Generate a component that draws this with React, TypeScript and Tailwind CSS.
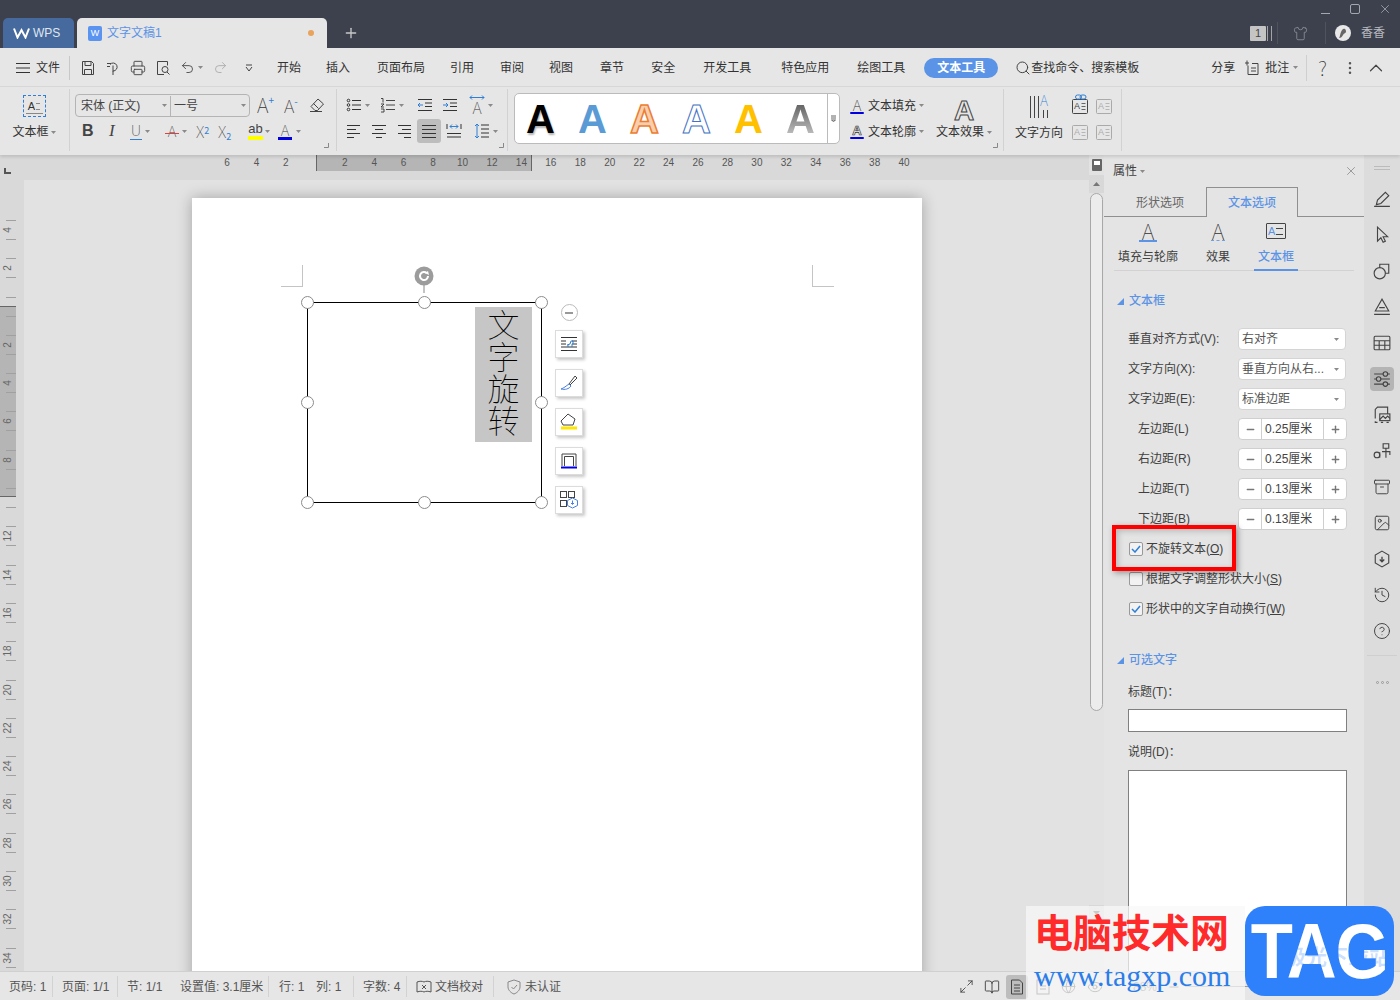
import type { ReactNode } from 'react';
import {
  Archive,
  BookOpen,
  ChevronUp,
  CircleHelp,
  EllipsisVertical,
  Eye,
  Globe,
  History,
  Image,
  Maximize2,
  Minus,
  Plus,
  Printer,
  Redo2,
  Search,
  Shirt,
  Undo2,
  X,
} from 'lucide-react';

const rulerTop = ['6', '4', '2', '', '2', '4', '6', '8', '10', '12', '14', '16', '18', '20', '22', '24', '26', '28', '30', '32', '34', '36', '38', '40'];
const rulerLeft = ['4', '2', '', '2', '4', '6', '8', '', '12', '14', '16', '18', '20', '22', '24', '26', '28', '30', '32', '34'];

const thin = "font-['Noto_Sans_CJK_SC',sans-serif] font-thin";

type SvgProps = { w?: number; h?: number; children: ReactNode; className?: string };

function Svg({ w = 16, h = 16, children, className = '' }: SvgProps) {
  return (
    <svg width={w} height={h} viewBox={`0 0 ${w} ${h}`} fill="none" stroke="currentColor" strokeWidth="1" className={`shrink-0 ${className}`}>
      {children}
    </svg>
  );
}

function Caret({ className = 'ml-[3px]' }: { className?: string }) {
  return (
    <svg width="5" height="3" viewBox="0 0 5 3" className={`shrink-0 ${className}`}>
      <path d="M0 0h5L2.5 3z" fill="#8a8a8a" />
    </svg>
  );
}

function Launcher({ className = '' }: { className?: string }) {
  return (
    <Svg w={5} h={5} className={`text-[#888] ${className}`}>
      <path d="M4.5 0v4.5H0" />
    </Svg>
  );
}

function Lines({ kind }: { kind: 'left' | 'center' | 'right' | 'justify' }) {
  const paths = {
    left: 'M1 2.500h13M1 6.500h9M1 10.500h13M1 14.500h7',
    center: 'M1 2.500h14M4 6.500h8M1 10.500h14M5 14.500h6',
    right: 'M2 2.500h13M6 6.500h9M2 10.500h13M8 14.500h7',
    justify: 'M1 2.500h14M1 6.500h14M1 10.500h14M1 14.500h14',
  };
  return (
    <Svg className="text-[#333]">
      <path d={paths[kind]} />
    </Svg>
  );
}

function SmallTextBox({ tone = 'muted', link }: { tone?: 'muted' | 'dark'; link?: boolean }) {
  const color = tone === 'dark' ? 'text-[#444]' : 'text-[#aaa]';
  return (
    <div className="relative flex h-[20px] w-[16px] items-end">
      <Svg w={16} h={15} className={color}>
        <rect x="0.5" y="0.5" width="15" height="14" rx="1" />
        <path d="M9.5 4.5h4M9.5 7.5h4M9.5 10.5h4" strokeWidth="0.8" />
      </Svg>
      <span className={`absolute bottom-[2px] left-[2px] text-[9px] leading-[11px] ${color}`}>A</span>
      {link && (
        <Svg w={12} h={7} className="absolute left-[3px] top-[0px] text-[#2f7fd6]">
          <rect x="0.5" y="1" width="6" height="4" rx="2" />
          <rect x="5" y="1" width="6" height="4" rx="2" />
        </Svg>
      )}
    </div>
  );
}

function Handle({ className }: { className: string }) {
  return <div className={`absolute h-[13px] w-[13px] rounded-full border border-[#8c8c8c] bg-white ${className}`} />;
}

function FloatBtn({ children }: { children: ReactNode }) {
  return (
    <div className="flex h-[28px] w-[28px] items-center justify-center border border-[#dcdcdc] bg-white shadow-[2px_2px_3px_rgba(0,0,0,0.22)]">
      {children}
    </div>
  );
}

function PanelSelect({ label, value }: { label: string; value: string }) {
  return (
    <div className="flex h-[30px] items-center pl-[24px]">
      <span className="w-[110px] text-[12px] text-[#404040]">{label}</span>
      <div className="flex h-[22px] w-[108px] items-center justify-between rounded-[4px] border border-[#d4d4d4] bg-white pl-[3px] pr-[6px] text-[12px] text-[#555]">
        <span>{value}</span>
        <Caret className="" />
      </div>
    </div>
  );
}

function Stepper({ label, value }: { label: string; value: string }) {
  return (
    <div className="flex h-[30px] items-center pl-[34px]">
      <span className="w-[100px] text-[12px] text-[#404040]">{label}</span>
      <div className="flex h-[22px] w-[109px] items-center rounded-[4px] border border-[#cfcfcf] bg-white text-[12px] text-[#444]">
        <span className="flex h-full w-[23px] items-center justify-center border-r border-[#cfcfcf]">
          <Minus size={11} strokeWidth={3} className="text-[#777]" />
        </span>
        <span className="flex-1 pl-[3px]">{value}</span>
        <span className="flex h-full w-[23px] items-center justify-center border-l border-[#cfcfcf]">
          <Plus size={11} strokeWidth={3} className="text-[#777]" />
        </span>
      </div>
    </div>
  );
}

function CheckRow({ checked, label, hot }: { checked: boolean; label: string; hot: string }) {
  return (
    <div className="flex h-[30px] items-center pl-[25px] text-[12px] text-[#404040]">
      <div className="mr-[3px] flex h-[14px] w-[14px] items-center justify-center rounded-[2px] border border-[#999] bg-[#f2f2f2]">
        {checked && (
          <Svg w={10} h={8} className="text-[#2f7fd6]">
            <path d="M1 4l3 3 5-6" strokeWidth="1.5" />
          </Svg>
        )}
      </div>
      <span>
        {label}(<span className="underline">{hot}</span>)
      </span>
    </div>
  );
}

function SectionTitle({ children, className = '' }: { children: ReactNode; className?: string }) {
  return (
    <div className={`flex h-[18px] items-center pl-[13px] text-[12px] text-[#5b93e6] ${className}`}>
      <svg width="7" height="7" viewBox="0 0 7 7" className="mr-[5px]">
        <path d="M7 0v7H0z" fill="#5b93e6" />
      </svg>
      {children}
    </div>
  );
}

function RailIcon({ children, active }: { children: ReactNode; active?: boolean }) {
  return (
    <div className="flex h-[36px] items-center justify-center text-[#444]">
      <div className={`flex h-[24px] w-[24px] items-center justify-center rounded-[4px] [&>svg]:h-[18px] [&>svg]:w-[18px] ${active ? 'bg-[#b4b4b4]' : ''}`}>{children}</div>
    </div>
  );
}

function TopBar() {
  return (
    <div className="relative flex h-[48px] items-end bg-[#3d414d] pl-[3px]">
      <div className="flex h-[30px] w-[71px] items-center rounded-t-[5px] bg-[#466a9e] pl-[10px] text-[12px] text-[#dfe6f0]">
        <Svg w={17} h={12} className="mr-[3px] text-white">
          <path d="M1 1.5l3.5 9L8.5 3l4 7.5L16 1.5" strokeWidth="2" />
        </Svg>
        WPS
      </div>
      <div className="ml-[3px] flex h-[30px] w-[250px] items-center whitespace-nowrap rounded-t-[5px] bg-[#e6e6e6] pl-[11px] text-[12px] text-[#5b93e6]">
        <div className="mr-[5px] flex h-[15px] w-[14px] shrink-0 items-center justify-center rounded-[2px] bg-[#5b93f0] text-[9px] leading-none text-white">W</div>
        文字文稿1
        <div className="ml-[146px] h-[6px] w-[6px] shrink-0 rounded-full bg-[#e8a35c]" />
      </div>
      <div className="ml-[16px] flex h-[30px] items-center text-[#c8c8c8]">
        <Plus size={16} strokeWidth={2} />
      </div>
      <div className="absolute right-0 top-0 flex h-[48px] w-[160px] flex-col items-end pr-[8px] text-[#a4a7ae]">
        <div className="flex h-[18px] items-center gap-[17px]">
          <Svg w={12} h={12}>
            <path d="M1 10.5h9" />
          </Svg>
          <Svg w={12} h={12}>
            <rect x="1.5" y="1.5" width="9" height="9" rx="1.5" />
          </Svg>
          <X size={14} strokeWidth={1.4} />
        </div>
        <div className="flex h-[30px] items-center pr-[7px]">
          <div className="flex h-[15px] w-[16px] items-center justify-center rounded-[1px] bg-[#c4c4c4] text-[11px] text-[#444]">1</div>
          <div className="ml-[1px] h-[15px] w-[5px] border-x border-[#a4a4a4]" />
          <div className="ml-[5px] h-[22px] w-px bg-[#4f535e]" />
          <Shirt size={15} strokeWidth={1.4} className="ml-[15px] text-[#8a8d95]" />
          <div className="ml-[17px] h-[22px] w-px bg-[#4f535e]" />
          <svg width="16" height="16" viewBox="0 0 16 16" className="ml-[9px]">
            <circle cx="8" cy="8" r="8" fill="#e8e8e8" />
            <path d="M10 4c-2-1-3 1-4 3s-1 5-2 6c2 0 3-1 4-3s3-2 3-3-0-2-1-3z" fill="#666" />
          </svg>
          <span className="ml-[10px] text-[12px] text-[#b8bac0]">香香</span>
        </div>
      </div>
    </div>
  );
}

function MenuBar() {
  const tabs = [
    ['开始', 'ml-[11px]'],
    ['插入', 'ml-[25px]'],
    ['页面布局', 'ml-[27px]'],
    ['引用', 'ml-[25px]'],
    ['审阅', 'ml-[26px]'],
    ['视图', 'ml-[25px]'],
    ['章节', 'ml-[27px]'],
    ['安全', 'ml-[27px]'],
    ['开发工具', 'ml-[28px]'],
    ['特色应用', 'ml-[30px]'],
    ['绘图工具', 'ml-[28px]'],
  ];
  return (
    <div className="flex h-[39px] items-center border-b border-[#d8d8d8] bg-[#e6e6e6] pl-[16px] pt-[1px] text-[12px] text-[#333]">
      <Svg w={14} h={12}>
        <path d="M0 1.5h14M0 6h14M0 10.5h14" />
      </Svg>
      <span className="ml-[6px]">文件</span>
      <div className="ml-[9px] h-[24px] w-px bg-[#c8c8c8]" />
      <div className="ml-[10px] flex w-[186px] items-center text-[#444]">
        <Svg className="mr-[9px]">
          <path d="M2.5 1.5h9l2 2v11h-11zM5 1.5v4h6v-4M4.5 14.5v-5h7v5" />
        </Svg>
        <Svg className="mr-[9px]">
          <path d="M5 4.5a4 4 0 1 1 3 6.5v4M8 5.5v6M2 3.5h4M2 6.5h3" />
        </Svg>
        <Printer size={16} strokeWidth={1.4} className="mr-[9px]" />
        <Svg className="mr-[9px]">
          <path d="M9 14.5H2.5v-13h10v4M4.5 3.5" />
          <circle cx="10" cy="9.5" r="3" />
          <path d="M12 12l2.5 2.5" />
        </Svg>
        <Undo2 size={15} strokeWidth={1.4} />
        <Caret className="ml-[3px] mr-[10px]" />
        <Redo2 size={15} strokeWidth={1.4} className="text-[#aaa]" />
        <Svg w={8} h={8} className="ml-[17px]">
          <path d="M1 1h6M1 3l3 4 3-4" />
        </Svg>
      </div>
      {tabs.map(([name, margin]) => (
        <span key={name} className={`whitespace-nowrap ${margin}`}>
          {name}
        </span>
      ))}
      <div className="ml-[19px] flex h-[20px] w-[74px] items-center justify-center rounded-full bg-[#5b93e6] font-bold text-white">文本工具</div>
      <Search size={16} strokeWidth={1.5} className="ml-[17px] text-[#444]" />
      <span className="whitespace-nowrap">查找命令、搜索模板</span>
      <span className="ml-[72px]">分享</span>
      <Svg className="ml-[10px] text-[#444]">
        <path d="M3 5.5v9h10v-11H7M2 .5v5M0 3h4M6 8h5M6 11h5" />
      </Svg>
      <span className="ml-[4px]">批注</span>
      <Caret className="ml-[4px]" />
      <div className="ml-[8px] h-[26px] w-px bg-[#cfcfcf]" />
      <span className={`ml-[11px] text-[20px] leading-none text-[#333] ${thin}`}>?</span>
      <EllipsisVertical size={16} strokeWidth={1.8} className="ml-[15px] text-[#555]" />
      <ChevronUp size={22} strokeWidth={1.3} className="ml-[7px] text-[#444]" />
    </div>
  );
}

function Letter({ className, children = 'A' }: { className: string; children?: ReactNode }) {
  return <span className={`font-['Liberation_Sans',sans-serif] leading-none ${className}`}>{children}</span>;
}

function Ribbon() {
  return (
    <div className="relative z-10 flex h-[68px] bg-[#e6e6e6] pt-[2px] text-[12px] text-[#333] shadow-[0_2px_3px_rgba(0,0,0,0.12)]">
      {/* 文本框 */}
      <div className="flex h-[62px] w-[70px] flex-col items-center border-r border-[#d2d2d2] pr-[1px]">
        <div className="relative mt-[6px] flex h-[22px] w-[23px] items-center justify-center border border-dashed border-[#2f7fd6] text-[11px] leading-none">
          <span>A</span>
          <span className="ml-[1px] h-[7px] w-[4px] border-y border-[#888]" />
          <span className="absolute bottom-[2px] left-[2px] h-px w-[17px] bg-[#888]" />
        </div>
        <div className="mt-[6px] flex items-center">
          文本框
          <Caret className="ml-[2px]" />
        </div>
      </div>

      {/* 字体 */}
      <div className="relative flex h-[62px] w-[267px] flex-col gap-[4px] border-r border-[#d2d2d2] pl-[5px] pt-[5px]">
        <div className="flex h-[22px] items-center">
          <div className="flex h-[23px] w-[175px] items-center rounded-[4px] border border-[#b4b4b4] pt-[1px] text-[#444]">
            <span className="w-[82px] pl-[5px]">宋体 (正文)</span>
            <Caret className="ml-[4px]" />
            <div className="ml-[3px] h-full w-px bg-[#b4b4b4]" />
            <span className="ml-[3px] flex-1">一号</span>
            <Caret className="mr-[3px]" />
          </div>
          <span className={`ml-[7px] flex w-[27px] items-start text-[20px] leading-none text-[#333] ${thin}`}>
            A<span className="text-[10px] font-normal text-[#2f7fd6]">+</span>
          </span>
          <span className={`flex w-[25px] items-start text-[18px] leading-none text-[#333] ${thin}`}>
            A<span className="text-[10px] font-normal text-[#2f7fd6]">-</span>
          </span>
          <Svg className="text-[#444]">
            <path d="M6 13.5l-4-4 7-7.5 5.5 5-6 6.5zM4.500 6.500l5 5M1 14.500h12" />
          </Svg>
        </div>
        <div className="flex h-[22px] items-center text-[#444]">
          <span className="w-[25px] pl-[7px] font-['Liberation_Sans',sans-serif] text-[16px] font-bold">B</span>
          <span className={`w-[25px] pl-[9px] font-['Liberation_Serif',serif] text-[17px] italic`}>I</span>
          <div className="flex w-[32px] items-center pl-[5px]">
            <div className="flex h-[18px] w-[12px] flex-col items-center leading-none">
              <span className={`text-[15px] leading-[15px] ${thin}`}>U</span>
              <span className="mt-[2px] h-px w-[12px] bg-[#2f7fd6]" />
            </div>
            <Caret className="ml-[3px]" />
          </div>
          <div className="flex w-[36px] items-center pl-[8px]">
            <div className={`relative h-[16px] w-[14px] text-center text-[15px] leading-[15px] ${thin}`}>
              A<span className="absolute left-0 top-[10px] h-px w-[14px] bg-[#e04040]" />
            </div>
            <Caret className="ml-[3px]" />
          </div>
          <span className={`w-[25px] pl-[3px] text-[16px] leading-none ${thin}`}>
            X<sup className="font-normal text-[9px] text-[#2f7fd6]">2</sup>
          </span>
          <span className={`w-[25px] text-[16px] leading-none ${thin}`}>
            X<sub className="font-normal text-[9px] text-[#2f7fd6]">2</sub>
          </span>
          <div className="flex w-[32px] items-center pl-[5px]">
            <div className="flex flex-col items-center">
              <span className="font-['Liberation_Sans',sans-serif] text-[13px] leading-[12px]">ab</span>
              <span className="mt-px h-[4px] w-[15px] bg-[#ffff00]" />
            </div>
            <Caret className="ml-[2px]" />
          </div>
          <div className="flex items-center pl-[3px]">
            <div className="flex flex-col items-center">
              <span className={`text-[15px] leading-[13px] ${thin}`}>A</span>
              <span className="mt-px h-[3px] w-[14px] bg-[#0000e0]" />
            </div>
            <Caret className="ml-[4px]" />
          </div>
        </div>
        <Launcher className="absolute bottom-[3px] right-[7px]" />
      </div>

      {/* 段落 */}
      <div className="relative flex h-[62px] w-[171px] flex-col gap-[4px] border-r border-[#d2d2d2] pl-[9px] pt-[5px] text-[#333]">
        <div className="flex h-[22px] items-center">
          <Svg>
            <path d="M6 3.500h9M6 8h9M6 12.500h9" />
            <circle cx="2.500" cy="3.500" r="1.300" />
            <circle cx="2.500" cy="8" r="1.300" />
            <circle cx="2.500" cy="12.500" r="1.300" />
          </Svg>
          <Caret className="ml-[3px]" />
          <Svg className="ml-[10px]">
            <path d="M6 3.500h9M6 8h9M6 12.500h9M1 1.500h2v4M1 7h3l-3 3h3M1 12h3v3H1" strokeWidth="0.9" />
          </Svg>
          <Caret className="ml-[3px]" />
          <Svg className="ml-[13px]">
            <path d="M1 2.500h14M8 6h7M8 9.500h7M1 13.500h14" />
            <path d="M6 8H1M3 6L1 8l2 2" stroke="#2f7fd6" />
          </Svg>
          <Svg className="ml-[9px]">
            <path d="M1 2.500h14M8 6h7M8 9.500h7M1 13.500h14" />
            <path d="M1 8h5M4 6l2 2-2 2" stroke="#2f7fd6" />
          </Svg>
          <div className={`relative ml-[11px] flex h-[20px] w-[16px] items-end justify-center text-[16px] leading-[15px] ${thin}`}>
            A
            <Svg w={16} h={5} className="absolute left-0 top-0 text-[#2f7fd6]">
              <path d="M1 2.500h14M3 .5l-2 2 2 2M13 .5l2 2-2 2" />
            </Svg>
          </div>
          <Caret className="ml-[3px]" />
        </div>
        <div className="flex h-[22px] items-center">
          <Lines kind="left" />
          <div className="ml-[9px]">
            <Lines kind="center" />
          </div>
          <div className="ml-[9px]">
            <Lines kind="right" />
          </div>
          <div className="ml-[5px] flex h-[24px] w-[24px] items-center justify-center rounded-[3px] bg-[#bdbdbd]">
            <Lines kind="justify" />
          </div>
          <Svg className="ml-[5px]">
            <path d="M1 10.500h14M1 14h14M1 1v5M15 1v5" />
            <path d="M4 3.500h8M6 1.500l-2 2 2 2M10 1.500l2 2-2 2" stroke="#2f7fd6" />
          </Svg>
          <Svg className="ml-[12px]">
            <path d="M7 2h8M7 6h8M7 10h8M7 14h8" />
            <path d="M3 1v14M1 3l2-2 2 2M1 13l2 2 2-2" stroke="#2f7fd6" />
          </Svg>
          <Caret className="ml-[3px]" />
        </div>
        <Launcher className="absolute bottom-[3px] right-[3px]" />
      </div>

      {/* 样式 */}
      <div className="relative flex h-[62px] w-[496px] border-r border-[#d2d2d2] pl-[6px] pt-[4px]">
        <div className="flex h-[51px] w-[326px] rounded-[5px] border border-[#bbb] bg-white">
          <div className="flex flex-1 items-center text-[40px] font-bold">
            <Letter className="w-[52px] pl-[11px] text-black [text-shadow:1px_2px_2px_rgba(0,0,0,0.3)]" />
            <Letter className="w-[52px] pl-[11px] text-[#5b9bd5]" />
            <Letter className="w-[52px] pl-[11px] text-[#f8cfae] [-webkit-text-stroke:1.5px_#ed7d31]" />
            <Letter className="w-[52px] pl-[11px] text-white [-webkit-text-stroke:1px_#4472c4]" />
            <Letter className="w-[52px] pl-[11px] text-[#ffc000]" />
            <Letter className="w-[52px] bg-gradient-to-b from-[#555] to-[#ccc] bg-clip-text pl-[11px] text-transparent" />
          </div>
          <div className="flex w-[13px] items-center justify-center border-l border-[#bbb]">
            <Svg w={7} h={7} className="text-[#666]">
              <path d="M1 1h5M1 3h5M1.500 5h4L3.500 6.500z" />
            </Svg>
          </div>
        </div>
        <div className="ml-[10px] flex w-[82px] flex-col gap-[4px] pt-[1px]">
          <div className="flex h-[22px] items-center pt-[1px]">
            <div className="flex w-[14px] flex-col items-center">
              <span className={`text-[15px] leading-[14px] ${thin}`}>A</span>
              <span className="h-[2px] w-[14px] rounded-full bg-[#0000e0]" />
            </div>
            <span className="ml-[4px]">文本填充</span>
            <Caret className="ml-[3px]" />
          </div>
          <div className="flex h-[22px] items-center pt-[1px]">
            <div className="flex w-[14px] flex-col items-center">
              <span className="font-['Liberation_Sans',sans-serif] text-[13px] font-bold leading-[13px] text-white [-webkit-text-stroke:0.7px_#333]">A</span>
              <span className="h-[2px] w-[14px] rounded-full bg-[#0000e0]" />
            </div>
            <span className="ml-[4px]">文本轮廓</span>
            <Caret className="ml-[3px]" />
          </div>
        </div>
        <div className="ml-[1px] flex w-[62px] flex-col items-center pt-[4px]">
          <Letter className="h-[22px] text-[28px] font-bold text-[#e6e6e6] [-webkit-text-stroke:1px_#444]" />
          <div className="mt-[4px] flex items-center whitespace-nowrap">
            文本效果
            <Caret className="ml-[3px]" />
          </div>
        </div>
        <Launcher className="absolute bottom-[3px] right-[5px]" />
      </div>

      {/* 文字方向 */}
      <div className="flex h-[62px] w-[118px] border-r border-[#d2d2d2] pl-[11px]">
        <div className="flex w-[48px] flex-col items-center pt-[6px]">
          <div className="relative h-[24px] w-[20px] text-[#444]">
            <Svg w={20} h={24}>
              <path d="M1.500 1v22M5.500 1v22M9.500 1v22M14.500 15v8M18.500 15v8" />
            </Svg>
            <span className={`absolute left-[11px] top-[-2px] text-[14px] leading-[15px] text-[#2f7fd6] ${thin}`}>A</span>
          </div>
          <span className="mt-[5px] whitespace-nowrap">文字方向</span>
        </div>
        <div className="ml-[9px] flex flex-col gap-[6px] pt-[5px]">
          <div className="flex gap-[8px]">
            <SmallTextBox tone="dark" link />
            <SmallTextBox />
          </div>
          <div className="flex gap-[8px]">
            <SmallTextBox />
            <SmallTextBox />
          </div>
        </div>
      </div>
    </div>
  );
}

function Rulers() {
  return (
    <div className="relative flex h-[25px] bg-[#d9d9d9]">
      <div className="absolute left-[316px] top-0 h-[16px] w-[216px] border-x border-[#666] bg-[#b5b5b5]" />
      <svg width="8" height="6" viewBox="0 0 8 6" className="absolute left-[4px] top-[13px]">
        <path d="M1 0v5h6" stroke="#555" strokeWidth="2" fill="none" />
      </svg>
      <div className="relative flex pl-[212.3px] text-[10px] leading-[15px] text-[#555]">
        {rulerTop.map((n, i) => (
          <span key={i} className="w-[29.45px] shrink-0 text-center font-['Liberation_Sans',sans-serif]">
            {n}
          </span>
        ))}
      </div>
    </div>
  );
}

function LeftRuler() {
  return (
    <div className="relative h-full w-[24px] shrink-0 overflow-hidden bg-[#d9d9d9] pt-[40px]">
      <div className="absolute left-0 top-[126px] h-[191px] w-[16px] border-y border-[#666] bg-[#b5b5b5]" />
      {rulerLeft.map((n, i) => (
        <div key={i} className="relative h-[38.3px] w-[16px] text-[#666]">
          <div className="absolute right-0 top-0 h-px w-[10px] bg-[#a0a0a0]" />
          <div className="absolute right-0 top-[19px] h-px w-[10px] bg-[#a0a0a0]" />
          <span className="absolute left-[1px] top-[3px] h-[14px] w-[14px] -rotate-90 text-center font-['Liberation_Sans',sans-serif] text-[10px] leading-[14px]">
            {n}
          </span>
        </div>
      ))}
    </div>
  );
}

function ShapeBox() {
  return (
    <div className="absolute left-[115px] top-[104px] flex h-[201px] w-[235px] justify-end pr-[10px] pt-[5px]">
      <div className="absolute inset-0 border-[1.5px] border-black" />
      <div className="relative flex h-[135px] w-[57px] flex-col items-center bg-[#c6c6c6] font-['Noto_Sans_CJK_SC',sans-serif] text-[32px] font-thin leading-[32px] text-black">
        <span>文</span>
        <span>字</span>
        <span>旋</span>
        <span>转</span>
      </div>
      <svg width="20" height="27" viewBox="0 0 20 27" className="absolute left-[107px] top-[-36px]">
        <path d="M10 18v9" stroke="#888" />
        <circle cx="10" cy="10" r="9.500" fill="#9c9c9c" />
        <path d="M14 10a4 4 0 1 1-1.200-2.800" stroke="#fff" strokeWidth="2" fill="none" />
        <path d="M11 7l3-2 1 4z" fill="#fff" />
      </svg>
      <Handle className="left-[-6px] top-[-6px]" />
      <Handle className="left-[111px] top-[-6px]" />
      <Handle className="left-[228px] top-[-6px]" />
      <Handle className="left-[-6px] top-[94px]" />
      <Handle className="left-[228px] top-[94px]" />
      <Handle className="left-[-6px] top-[194px]" />
      <Handle className="left-[111px] top-[194px]" />
      <Handle className="left-[228px] top-[194px]" />
      <div className="absolute left-[248px] top-[2px] flex flex-col items-center gap-[11px]">
        <div className="mb-[-2px] flex h-[17px] w-[17px] items-center justify-center rounded-full border border-[#bbb] bg-white">
          <div className="h-[2px] w-[8px] bg-[#999]" />
        </div>
        <FloatBtn>
          <Svg w={18} h={16} className="text-[#333]">
            <path d="M1 1.500h16M1 14.500h16M1 5h5M1 8h5M1 11h16M12 5h5M12 8h5" />
            <path d="M7 9l3-1 1-3 2 0v3M8 9v2M12 8v3" stroke="#2f7fd6" />
          </Svg>
        </FloatBtn>
        <FloatBtn>
          <Svg w={18} h={18}>
            <path d="M9 10l6-8 2 2-7 7" stroke="#444" />
            <path d="M9 10l2 2c-2 3-6 4-10 3 3-1 5-3 8-5z" stroke="#4a80e0" />
          </Svg>
        </FloatBtn>
        <FloatBtn>
          <Svg w={18} h={18}>
            <path d="M8 1l7 5-2 6H3L1 8z" stroke="#444" />
            <path d="M1 15h16" stroke="#ffe600" strokeWidth="3" />
          </Svg>
        </FloatBtn>
        <FloatBtn>
          <Svg w={18} h={18}>
            <path d="M2 14V2h14v12M4.500 14V4.500h9V14" stroke="#444" />
            <path d="M1 15.500h16" stroke="#0000e6" strokeWidth="2" />
          </Svg>
        </FloatBtn>
        <FloatBtn>
          <Svg w={18} h={18}>
            <rect x="0.500" y="0.500" width="6" height="6" stroke="#444" />
            <rect x="8.500" y="0.500" width="6" height="6" stroke="#444" />
            <rect x="0.500" y="9.500" width="6" height="6" stroke="#444" />
            <path d="M12.500 7l5 2.500v5l-5 2.500-5-2.500v-5z" stroke="#4a80e0" fill="#fff" />
            <path d="M12.500 9.500v3.500M11 12l1.500 1.500L14 12" stroke="#4a80e0" />
          </Svg>
        </FloatBtn>
      </div>
    </div>
  );
}

function DocArea() {
  return (
    <div className="flex h-full flex-1 overflow-hidden bg-[#e2e2e2] pl-[168px] pt-[18px]">
      <div className="relative h-[900px] w-[730px] bg-white shadow-[0_0_14px_rgba(0,0,0,0.28)]">
        <div className="absolute left-[89px] top-[67px] h-[22px] w-[22px] border-b border-r border-[#c4c4c4]" />
        <div className="absolute left-[620px] top-[67px] h-[22px] w-[22px] border-b border-l border-[#c4c4c4]" />
        <ShapeBox />
      </div>
    </div>
  );
}

function ScrollColumn() {
  return (
    <div className="flex h-full w-[15px] shrink-0 flex-col items-center bg-[#e2e2e2]">
      <div className="flex h-[20px] w-full items-center justify-center">
        <div className="flex h-[12px] w-[10px] items-start justify-center rounded-[1px] bg-[#666]">
          <div className="mt-[2px] h-[4px] w-[6px] bg-white" />
        </div>
      </div>
      <div className="flex h-[18px] w-full items-center justify-center bg-[#d8d8d8]">
        <svg width="7" height="4" viewBox="0 0 7 4">
          <path d="M3.500 0L7 4H0z" fill="#777" />
        </svg>
      </div>
      <div className="h-[518px] w-[13px] rounded-full border border-[#a8a8a8] bg-[#ececec]" />
      <div className="h-[194px]" />
      <div className="flex h-[16px] w-full items-center justify-center bg-[#d8d8d8]">
        <svg width="7" height="4" viewBox="0 0 7 4">
          <path d="M0 0h7L3.500 4z" fill="#555" />
        </svg>
      </div>
    </div>
  );
}

function SidePanel() {
  return (
    <div className="h-full w-[260px] shrink-0 overflow-hidden bg-[#e4e4e4] text-[12px] text-[#404040]">
      <div className="flex h-[32px] items-center pl-[9px] pr-[6px]">
        <span>属性</span>
        <Caret className="ml-[3px]" />
        <X size={14} strokeWidth={1.4} className="ml-auto text-[#8a8a8a]" />
      </div>
      <div className="flex h-[30px] items-end border-b border-[#8f8f8f]">
        <div className="flex h-[29px] w-[102px] items-center justify-center pl-[10px] pt-[2px] text-[#666]">形状选项</div>
        <div className="mb-[-1px] flex h-[30px] w-[92px] items-center justify-center border-x border-t border-[#8f8f8f] bg-[#e4e4e4] pt-[1px] font-medium text-[#5b93e6]">
          文本选项
        </div>
      </div>
      <div className="mx-[10px] flex h-[54px] border-b border-[#d2d2d2] text-[12px]">
        <div className="flex w-[68px] flex-col items-center pt-[4px]">
          <div className="flex h-[21px] w-[18px] flex-col items-center border-b-[2px] border-[#5b93e6]">
            <span className={`text-[22px] leading-[19px] text-[#333] ${thin}`}>A</span>
          </div>
          <span className="mt-[6px] whitespace-nowrap">填充与轮廓</span>
        </div>
        <div className="ml-[16px] flex w-[40px] flex-col items-center pt-[4px]">
          <div className="flex h-[21px] w-[18px] flex-col items-center">
            <span className={`text-[22px] leading-[19px] text-[#333] ${thin}`}>A</span>
            <span className="h-px w-[14px] border-t border-dashed border-[#6fa0e0]" />
          </div>
          <span className="mt-[6px]">效果</span>
        </div>
        <div className="ml-[16px] flex h-[54px] w-[44px] flex-col items-center border-b-[2px] border-[#5b93e6] pt-[6px] text-[#5b93e6]">
          <div className="relative flex h-[16px] w-[20px] items-center rounded-[1px] border border-[#444] pl-[1px] text-[11px] leading-none">
            A
            <span className="ml-[1px] h-[7px] w-[7px] border-y border-[#444]" />
          </div>
          <span className="mt-[9px] font-medium">文本框</span>
        </div>
      </div>
      <SectionTitle className="mt-[21px] font-medium">文本框</SectionTitle>
      <div className="mt-[14px]">
        <PanelSelect label="垂直对齐方式(V):" value="右对齐" />
        <PanelSelect label="文字方向(X):" value="垂直方向从右..." />
        <PanelSelect label="文字边距(E):" value="标准边距" />
        <Stepper label="左边距(L)" value="0.25厘米" />
        <Stepper label="右边距(R)" value="0.25厘米" />
        <Stepper label="上边距(T)" value="0.13厘米" />
        <Stepper label="下边距(B)" value="0.13厘米" />
        <CheckRow checked label="不旋转文本" hot="O" />
        <CheckRow checked={false} label="根据文字调整形状大小" hot="S" />
        <CheckRow checked label="形状中的文字自动换行" hot="W" />
      </div>
      <SectionTitle className="mt-[27px] font-medium">可选文字</SectionTitle>
      <div className="mt-[13px] flex h-[20px] items-center pl-[24px]">标题(T)：</div>
      <div className="ml-[24px] mt-[7px] h-[23px] w-[219px] border border-[#808080] bg-white" />
      <div className="mt-[10px] flex h-[20px] items-center pl-[24px]">说明(D)：</div>
      <div className="ml-[24px] mt-[8px] h-[240px] w-[219px] border border-[#808080] bg-white" />
    </div>
  );
}

function RightRail() {
  return (
    <div className="h-full w-[36px] shrink-0 bg-[#dcdcdc]">
      <div className="flex h-[26px] items-center justify-center">
        <div className="h-[4px] w-[16px] border-y border-[#bbb]" />
      </div>
      <RailIcon>
        <Svg>
          <path d="M1 14.500h14M3 13l1-4 7-7 3 3-7 7z" />
        </Svg>
      </RailIcon>
      <RailIcon>
        <Svg>
          <path d="M4 1l9 8.500H9l2 4-2 1-2-4-3 3z" />
        </Svg>
      </RailIcon>
      <RailIcon>
        <Svg>
          <circle cx="6" cy="10" r="5" />
          <path d="M6 5V2h8v8h-3" />
        </Svg>
      </RailIcon>
      <RailIcon>
        <Svg>
          <path d="M2 11.500L8 1l6 10.500zM5.500 8.500h5M1 14.500h14" />
        </Svg>
      </RailIcon>
      <RailIcon>
        <Svg>
          <rect x="1" y="2" width="14" height="12" rx="1" />
          <path d="M1 6h14M1 10h14M5.500 6v8M10.500 6v8" />
        </Svg>
      </RailIcon>
      <RailIcon active>
        <Svg>
          <path d="M1 3.500h8M13 3.500h2M1 8h2M7 8h8M1 12.500h8M13 12.500h2" />
          <circle cx="11" cy="3.500" r="2" />
          <circle cx="5" cy="8" r="2" />
          <circle cx="11" cy="12.500" r="2" />
        </Svg>
      </RailIcon>
      <RailIcon>
        <Svg>
          <path d="M2 11V3l2-2h9v6M2 13.500v1h2M7 14.500h2M12 14.500h2" />
          <rect x="6" y="7" width="9" height="6" />
          <path d="M6 12l3-3 2 2 2-2 2 2" />
        </Svg>
      </RailIcon>
      <RailIcon>
        <Svg>
          <circle cx="3.500" cy="11.500" r="2.500" />
          <path d="M6 9v5M9 1.500h5v4H9zM11.500 5.500V14M8 8.500h7v3" />
        </Svg>
      </RailIcon>
      <RailIcon>
        <Archive size={16} strokeWidth={1.3} />
      </RailIcon>
      <RailIcon>
        <Image size={16} strokeWidth={1.3} />
      </RailIcon>
      <RailIcon>
        <Svg>
          <path d="M8 1l6 3.500v7L8 15l-6-3.500v-7z" />
          <path d="M8 6v4M6 8.500L8 10.500l2-2" strokeWidth="1.200" />
        </Svg>
      </RailIcon>
      <RailIcon>
        <History size={16} strokeWidth={1.3} />
      </RailIcon>
      <RailIcon>
        <CircleHelp size={16} strokeWidth={1.3} />
      </RailIcon>
      <div className="mx-[3px] mt-[6px] h-px bg-[#cfcfcf]" />
      <div className="mt-[25px] flex justify-center gap-[2px]">
        <span className="h-[3px] w-[3px] rounded-full border border-[#999]" />
        <span className="h-[3px] w-[3px] rounded-full border border-[#999]" />
        <span className="h-[3px] w-[3px] rounded-full border border-[#999]" />
      </div>
    </div>
  );
}

function StatusBar() {
  const sep = 'h-[21px] w-px bg-[#d2d2d2]';
  return (
    <div className="flex h-[29px] items-center border-t border-[#d0d0d0] bg-[#e6e6e6] pl-[9px] pt-[1px] text-[12px] text-[#555]">
      <span className="w-[43px]">页码: 1</span>
      <div className={sep} />
      <span className="w-[64px] pl-[9px]">页面: 1/1</span>
      <div className={sep} />
      <span className="w-[62px] pl-[9px]">节: 1/1</span>
      <span className="w-[88px] whitespace-nowrap">设置值: 3.1厘米</span>
      <div className={sep} />
      <span className="w-[47px] pl-[10px]">行: 1</span>
      <span className="w-[37px]">列: 1</span>
      <div className={sep} />
      <span className="w-[52px] pl-[9px]">字数: 4</span>
      <div className={sep} />
      <Svg w={16} h={14} className="ml-[9px] text-[#555]">
        <path d="M1 2c3-1 5-1 7 0 2-1 4-1 7 0v10c-3-1-5-1-7 0-2-1-4-1-7 0zM6 5l4 4M10 5l-4 4" />
      </Svg>
      <span className="ml-[3px] w-[58px]">文档校对</span>
      <div className={sep} />
      <Svg w={14} h={16} className="ml-[13px] text-[#888]">
        <path d="M7 1l6 2v5c0 3-3 6-6 7-3-1-6-4-6-7V3zM4.500 8l2 2 3.500-4" />
      </Svg>
      <span className="ml-[4px]">未认证</span>
      <div className="ml-[398px] flex items-center text-[#444]">
        <Maximize2 size={15} strokeWidth={1.4} />
        <BookOpen size={16} strokeWidth={1.4} className="ml-[10px]" />
        <div className="ml-[6px] flex h-[24px] w-[22px] items-center justify-center rounded-[3px] bg-[#bdbdbd]">
          <Svg w={14} h={16}>
            <path d="M1.500 1h8l3 3v11h-11zM4 6h6M4 9h6M4 12h6" />
          </Svg>
        </div>
        <Svg w={14} h={16} className="ml-[8px]">
          <rect x="1" y="1" width="12" height="14" />
          <path d="M4 7h6M4 10h6" />
        </Svg>
        <Globe size={15} strokeWidth={1.4} className="ml-[11px]" />
        <Eye size={16} strokeWidth={1.4} className="ml-[11px]" />
        <span className="ml-[30px] text-[#777]">88%</span>
        <Minus size={14} strokeWidth={1.4} className="ml-[10px]" />
        <div className="ml-[4px] h-px w-[150px] bg-[#999]" />
        <Plus size={14} strokeWidth={1.8} className="ml-[3px]" />
        <Maximize2 size={14} strokeWidth={1.4} className="ml-[14px]" />
      </div>
    </div>
  );
}

function Watermark() {
  return (
    <>
      <div className="absolute left-[1026px] top-[906px] flex h-[94px] w-[219px] flex-col bg-[rgba(248,248,248,0.72)] pl-[8px]">
        <span className="mt-[1px] whitespace-nowrap font-['Noto_Sans_CJK_SC',sans-serif] text-[39px] font-bold leading-[46px] text-[#ff2a2a]">电脑技术网</span>
        <span className="mt-[9px] whitespace-nowrap font-['Liberation_Serif',serif] text-[30px] leading-[28px] text-[#2b7de9]">www.tagxp.com</span>
      </div>
      <div className="absolute left-[1245px] top-[906px] flex h-[90px] w-[149px] items-center justify-center overflow-hidden rounded-[20px] bg-[#2f80fb]">
        <span className="scale-y-[1.14] font-['Liberation_Sans',sans-serif] text-[69px] font-bold leading-none tracking-[-1px] text-white">TAG</span>
      </div>
      <div className="absolute left-[1285px] top-[945px] flex flex-col text-[#2f80fb]/25">
        <span className="text-[21px] font-bold leading-[24px]">极光下载站</span>
        <span className="mt-[6px] font-['Liberation_Sans',sans-serif] text-[16px] leading-[18px]">www.xz7.com</span>
      </div>
    </>
  );
}

export default function App() {
  return (
    <div className="relative flex h-[1000px] w-[1400px] flex-col overflow-hidden bg-[#e6e6e6] font-['Liberation_Sans','Noto_Sans_CJK_SC',sans-serif]">
      <TopBar />
      <MenuBar />
      <Ribbon />
      <div className="flex h-[816px] min-h-0">
        <div className="flex h-full w-[1089px] shrink-0 flex-col">
          <Rulers />
          <div className="flex h-[791px]">
            <LeftRuler />
            <DocArea />
          </div>
        </div>
        <ScrollColumn />
        <SidePanel />
        <RightRail />
      </div>
      <StatusBar />
      <div className="pointer-events-none absolute left-[1112px] top-[525px] h-[46px] w-[124px] border-[4px] border-[#f00] shadow-[2px_2px_6px_rgba(0,0,0,0.35),inset_2px_2px_6px_rgba(0,0,0,0.2)]" />
      <Watermark />
    </div>
  );
}
